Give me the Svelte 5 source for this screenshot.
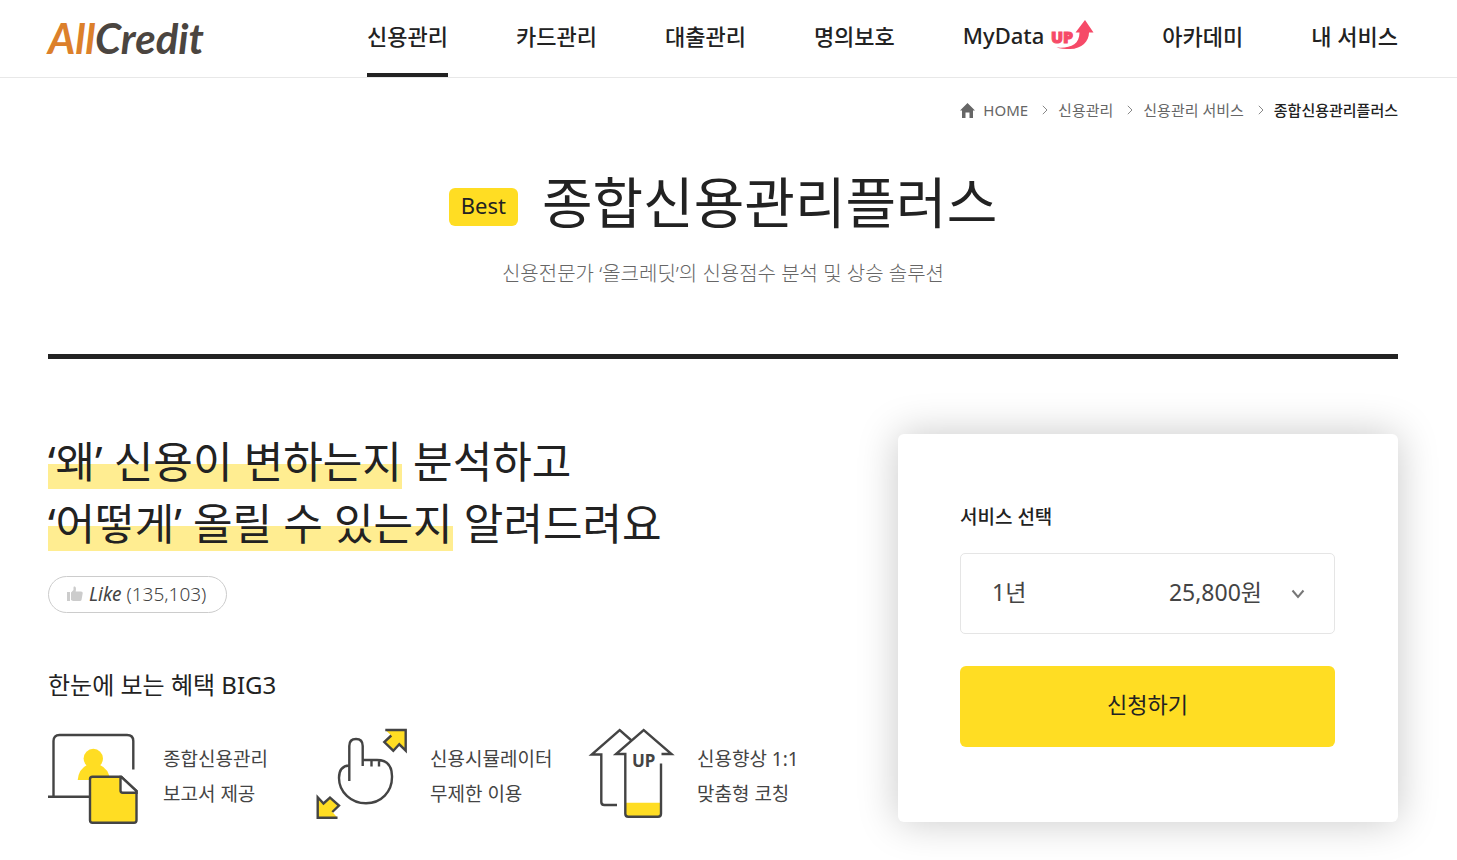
<script lang="ts">
	const menus = ['신용관리', '카드관리', '대출관리', '명의보호', 'MyData', '아카데미', '내 서비스'];
	const crumbs = ['신용관리', '신용관리 서비스', '종합신용관리플러스'];
	const plans = [{ name: '1년', price: 25800 }];

	let current = $state('신용관리');
	let selected = $state('1년');
	let price = $derived(plans.find((p) => p.name === selected)?.price ?? 0);
</script>

<header class="header">
	<a href="/" class="logo"><span>All</span>Credit</a>
	<nav class="menu">
		{#each menus as menu}
			<a href="#menu" class:active={menu === current} onclick={() => (current = menu)}>
				{menu}
				{#if menu === 'MyData'}
					<svg class="up" viewBox="0 0 44 32" aria-hidden="true">
						<text x="1" y="24">UP</text>
						<path d="M35 1 43.5 13.5H39C39 22 32 30 20 30c-5 0-10-.5-13.500-1.500C20 29.500 29.500 26 29.500 13.500H25.500Z" />
					</svg>
				{/if}
			</a>
		{/each}
	</nav>
</header>

<main class="container">
	<nav class="breadcrumb" aria-label="breadcrumb">
		<a href="/" class="home">
			<svg width="15" height="15" viewBox="0 0 15 15" aria-hidden="true">
				<path d="M7.500 0 15 7.500H13V15H9.500V9.500H5.500V15H2V7.500H0Z" />
			</svg>
			HOME
		</a>
		{#each crumbs as crumb, i}
			<svg class="arrow" width="6" height="10" viewBox="0 0 6 10" aria-hidden="true">
				<path d="m.8.8 4.200 4.200-4.200 4.200" />
			</svg>
			{#if i === crumbs.length - 1}
				<strong>{crumb}</strong>
			{:else}
				<a href="#crumb">{crumb}</a>
			{/if}
		{/each}
	</nav>

	<div class="title">
		<span class="badge">Best</span>
		<h1>종합신용관리플러스</h1>
	</div>
	<p class="subtitle">신용전문가 ‘올크레딧’의 신용점수 분석 및 상승 솔루션</p>

	<div class="content">
		<section class="intro">
			<h2>
				<span class="row"><mark>‘왜’ 신용이 변하는지</mark> 분석하고</span>
				<span class="row"><mark>‘어떻게’ 올릴 수 있는지</mark> 알려드려요</span>
			</h2>

			<button type="button" class="like">
				<svg width="16" height="16" viewBox="0 0 16 16" aria-hidden="true">
					<path d="M0 6h3v9H0ZM4 6.500 6.500 4V1.500Q6.500 0 7.800.5 9.500 1.200 8.700 5.500H14q2 0 1.700 1.800L14.500 14q-.3 1-1.500 1H6l-2-1Z" />
				</svg>
				<span><em>Like</em> (135,103)</span>
			</button>

			<h3>한눈에 보는 혜택 BIG3</h3>
			<ul class="benefits">
				<li>
					<svg viewBox="0 0 100 104" aria-hidden="true">
						<path class="line" d="M0 72.700H42M5.500 72.700V17q0-6 6-6H79q6.300 0 6.300 6V45.500" />
						<circle class="fill" cx="45.300" cy="34.500" r="9.700" />
						<path class="fill" d="M29.700 56q1-11 9.300-15H52q9 4 10 15Z" />
						<path class="line fill" d="M44.500 52.700H73L88.500 67V96.200q0 2.500-2.500 2.500H44.500q-2.500 0-2.500-2.500V55.200q0-2.500 2.500-2.500Z" />
						<path class="line paper" d="M72.500 53V66.500q0 2.200 2.200 2.200H88.500V67L73.500 53Z" />
					</svg>
					<p>종합신용관리<br />보고서 제공</p>
				</li>
				<li>
					<svg viewBox="0 0 100 104" aria-hidden="true">
						<path class="line" d="M34.300 57V22q0-7 6.700-7t6.700 7V42M47.700 36H62Q76.700 36 77 52C77.500 68 66 79.300 51 79.300S24 68 24 54Q24 42 34.300 41.500M56.500 36v6.500M64 36v6.500" />
						<path class="line fill" d="M70.300 6H90.700V26.700L84.300 20.300 78.300 26.700 69.300 18 76.300 11.500" />
						<path class="line fill" d="M22.500 93.700H2.700V73.300L8.500 79.500 15 73.500 24 81.500 17.300 88" />
					</svg>
					<p>신용시뮬레이터<br />무제한 이용</p>
				</li>
				<li>
					<svg viewBox="0 0 100 104" aria-hidden="true">
						<path class="fill" d="M43.700 78.700H79V92.500H43.700Z" />
						<path class="line" d="M49.500 16.500 37.700 6 9.700 30.500H19.300V78q0 3 3 3H35" />
						<path class="line" d="M79.500 30H89.500L61.700 6 34 30H43.300V89.700q0 3 3 3H76q3 0 3-3V39.500" />
						<text x="50" y="43">UP</text>
					</svg>
					<p>신용향상 1:1<br />맞춤형 코칭</p>
				</li>
			</ul>
		</section>

		<form class="card" onsubmit={(e) => e.preventDefault()}>
			<label for="plan">서비스 선택</label>
			<div class="select">
				<select id="plan" bind:value={selected}>
					{#each plans as plan}
						<option value={plan.name}>{plan.name}</option>
					{/each}
				</select>
				<span class="price">{price.toLocaleString('en-US')}원</span>
				<svg width="14" height="10" viewBox="0 0 14 10" aria-hidden="true">
					<path d="m1.500 1.500 5.500 6.500 5.500-6.500" />
				</svg>
			</div>
			<button type="submit">신청하기</button>
		</form>
	</div>
</main>

<style>
	:global(body) {
		margin: 0;
		background: #fff;
		color: #222;
		font-family: 'Noto Sans', 'Noto Sans CJK KR', sans-serif;
	}

	a {
		color: inherit;
		text-decoration: none;
	}

	h1,
	h2,
	h3,
	p,
	ul {
		margin: 0;
		padding: 0;
	}

	.header {
		display: flex;
		justify-content: space-between;
		padding: 0 59px 0 48px;
		border-bottom: 1px solid #e8e8e8;
	}

	.logo {
		font-family: Lato, sans-serif;
		font-size: 42px;
		font-weight: 700;
		font-style: italic;
		line-height: 77px;
		color: #4b4540;
	}

	.logo span {
		color: #dc802b;
	}

	.menu {
		display: flex;
		gap: 68px;
	}

	.menu a {
		display: flex;
		align-items: center;
		gap: 6px;
		height: 69px;
		padding-bottom: 4px;
		border-bottom: 4px solid transparent;
		font-size: 22px;
		font-weight: 500;
		white-space: nowrap;
	}

	.menu a.active {
		border-color: #222;
	}

	.up {
		width: 44px;
		height: 32px;
		fill: #f64a68;
	}

	.up text {
		font-size: 16px;
		font-weight: 900;
		stroke: #f64a68;
	}

	.container {
		padding: 20px 59px 38px 48px;
	}

	.breadcrumb {
		display: flex;
		justify-content: flex-end;
		align-items: center;
		font-size: 15px;
		line-height: 24px;
		color: #666;
	}

	.breadcrumb strong {
		font-weight: 500;
		color: #222;
	}

	.home {
		display: flex;
		align-items: center;
		gap: 8px;
	}

	.home svg {
		fill: #666;
	}

	.arrow {
		margin: 0 10px 0 14px;
		fill: none;
		stroke: #888;
	}

	.title {
		display: flex;
		justify-content: center;
		align-items: center;
		gap: 24px;
		margin-top: 40px;
	}

	.badge {
		margin-top: 10px;
		padding: 0 12px 4px;
		border-radius: 6px;
		background: #ffdd23;
		font-size: 22px;
		line-height: 34px;
	}

	h1 {
		font-size: 55px;
		font-weight: 400;
		line-height: 80px;
	}

	.subtitle {
		margin-top: 17px;
		padding-bottom: 65px;
		border-bottom: 5px solid #222;
		font-size: 20px;
		font-weight: 300;
		line-height: 30px;
		text-align: center;
		color: #666;
	}

	.content {
		display: flex;
		justify-content: space-between;
		align-items: flex-start;
		padding-top: 72px;
	}

	h2 {
		font-size: 43px;
		font-weight: 400;
		line-height: 62px;
	}

	.row {
		display: block;
	}

	mark {
		display: inline-block;
		background: linear-gradient(transparent 33px, #ffed91 33px, #ffed91 58px, transparent 58px);
		color: inherit;
	}

	.like {
		display: flex;
		align-items: center;
		gap: 6px;
		height: 37px;
		margin-top: 21px;
		padding: 0 20px 2px 18px;
		border: 1px solid #ccc;
		border-radius: 19px;
		background: #fff;
		color: #444;
		font-family: inherit;
		font-size: 19px;
		font-weight: 300;
	}

	.like em {
		font-weight: 400;
	}

	.like svg {
		fill: #ccc;
	}

	h3 {
		margin-top: 57px;
		font-size: 24px;
		font-weight: 400;
		line-height: 30px;
	}

	.benefits {
		display: grid;
		grid-template-columns: repeat(3, 267px);
		margin-top: 24px;
		list-style: none;
	}

	.benefits li {
		display: flex;
		align-items: center;
		gap: 15px;
		font-size: 19px;
		line-height: 35px;
		color: #444;
	}

	.benefits p {
		padding-top: 2px;
	}

	.benefits svg {
		width: 100px;
		height: 104px;
	}

	.benefits text {
		font-size: 17px;
		font-weight: 700;
		fill: #444;
	}

	.line {
		fill: none;
		stroke: #444;
		stroke-width: 2.4;
	}

	.fill {
		fill: #ffdd23;
	}

	.paper {
		fill: #fff;
	}

	.card {
		box-sizing: border-box;
		width: 500px;
		margin-top: 3px;
		padding: 68px 63px 75px 62px;
		border-radius: 6px;
		background: #fff;
		box-shadow: 0 0 40px rgba(0, 0, 0, 0.22);
	}

	.card label {
		display: block;
		font-size: 19px;
		font-weight: 500;
		line-height: 30px;
	}

	.select {
		display: grid;
		grid-template-columns: 1fr auto 14px;
		align-items: center;
		column-gap: 29px;
		box-sizing: border-box;
		height: 81px;
		margin: 21px 0 32px;
		padding-right: 29px;
		border: 1px solid #e5e5e5;
		border-radius: 5px;
		color: #444;
		font-size: 23px;
	}

	/* the select fills the whole box, price and arrow sit on top of it */
	.select select {
		grid-area: 1 / 1 / 2 / 4;
		height: 79px;
		margin-right: -29px;
		padding: 0 31px 4px;
		border: 0;
		background: none;
		appearance: none;
		color: inherit;
		font: inherit;
	}

	.price {
		grid-area: 1 / 2;
		padding-bottom: 6px;
		pointer-events: none;
	}

	.select svg {
		grid-area: 1 / 3;
		fill: none;
		stroke: #777;
		stroke-width: 2;
		pointer-events: none;
	}

	.card button {
		display: block;
		width: 100%;
		height: 81px;
		padding: 0 0 8px;
		border: 0;
		border-radius: 6px;
		background: #ffdd23;
		color: #222;
		font-family: inherit;
		font-size: 22px;
		cursor: pointer;
	}
</style>
